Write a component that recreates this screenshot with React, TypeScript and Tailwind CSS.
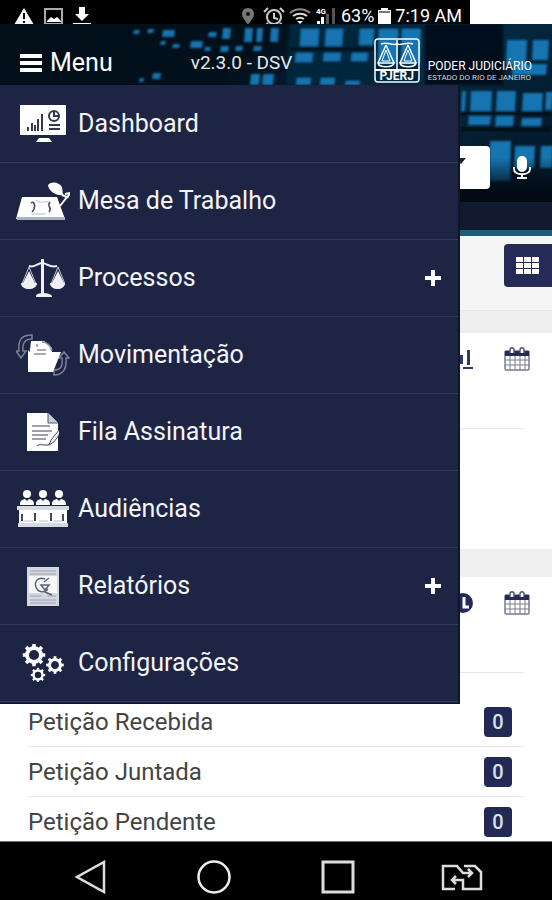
import type { ReactNode } from 'react';

interface MenuEntry {
  label: string;
  icon: ReactNode;
  expandable?: boolean;
}

interface Petition {
  label: string;
  count: number;
}

// x, y, width, height of the lit windows in the header photo
const WINDOWS = [
  [133, 6, 6, 4], [147, 5, 6, 4], [162, 6, 12, 7], [160, 17, 5, 4], [172, 20, 7, 4], [190, 17, 12, 7],
  [208, 8, 8, 5], [222, 4, 8, 11], [204, 23, 6, 4], [220, 22, 8, 6], [244, 4, 8, 14], [256, 4, 6, 14],
  [235, 22, 7, 5], [253, 22, 8, 5], [270, 4, 8, 14], [152, 49, 8, 6], [139, 54, 4, 4], [250, 50, 9, 11],
  [262, 50, 11, 11], [300, 5, 18, 17], [325, 5, 17, 17], [295, 29, 17, 9], [323, 29, 17, 8],
  [359, 5, 14, 16], [351, 29, 16, 8], [378, 5, 19, 34], [401, 5, 19, 34], [296, 54, 14, 7], [320, 54, 14, 7],
  [345, 57, 14, 4], [506, 16, 20, 24], [532, 16, 16, 20], [512, 40, 34, 11],
  [461, 67, 4, 20], [470, 67, 21, 20], [496, 67, 19, 20], [522, 69, 20, 18], [468, 92, 22, 9],
  [495, 92, 18, 10], [521, 94, 20, 8], [545, 68, 7, 18], [489, 117, 21, 40], [514, 122, 20, 22], [540, 122, 12, 22],
];

function HeaderPhoto() {
  return (
    <svg className="absolute inset-0 h-full w-full" viewBox="0 0 552 178" preserveAspectRatio="xMidYMin slice" aria-hidden="true">
      <defs>
        <linearGradient id="night" x1="0" y1="0" x2="1" y2="0.4">
          <stop offset="0" stopColor="#020f19" />
          <stop offset="0.45" stopColor="#02101b" />
          <stop offset="0.75" stopColor="#052c46" />
          <stop offset="1" stopColor="#041c2e" />
        </linearGradient>
        <linearGradient id="floor" x1="0" y1="0" x2="0" y2="1">
          <stop offset="0.75" stopColor="#020b14" stopOpacity="0" />
          <stop offset="0.95" stopColor="#020b14" />
        </linearGradient>
        <filter id="soft">
          <feGaussianBlur stdDeviation="1.2" />
        </filter>
      </defs>
      <rect width="552" height="178" fill="url(#night)" />
      <g filter="url(#soft)">
        <path d="M290 0h130v61H286z" fill="#05263e" />
        <path d="M425 0h78v61h-78z" fill="#03111d" />
        <g fill="#1874b0">
          {WINDOWS.map(([x, y, w, h]) => (
            <path key={`${x}-${y}`} d={`M${x + 1} ${y}h${w}l-1 ${h}h${-w}z`} />
          ))}
        </g>
        <path d="M461 89h91M461 105h91M290 25h84" stroke="#020d17" strokeWidth="3" />
      </g>
      <rect width="552" height="178" fill="url(#floor)" />
    </svg>
  );
}

function CourtLogo() {
  return (
    <svg width="46" height="45" viewBox="0 0 46 45" fill="none" stroke="#fff" strokeWidth="1.5" aria-hidden="true">
      <rect x="1" y="1" width="44" height="43" rx="3" />
      <path d="M23 2v30M7 6c6-3 11 2 16 0 5 2 10-3 16 0" />
      <path d="M12 7L4 25M12 7l8 18M34 7l-8 18M34 7l8 18" />
      <path d="M4 25h16c-1 5-15 5-16 0zM26 25h16c-1 5-15 5-16 0z" />
      <path d="M12 12l-4 11h8zM34 12l-4 11h8z" strokeWidth="1" />
      <path d="M1 32h44" strokeWidth="2" />
    </svg>
  );
}

function DashboardIcon() {
  return (
    <svg width="46" height="38" viewBox="0 0 46 38" aria-hidden="true">
      <path d="M0 0h46v30H0zM19 33h10l3 4H16z" fill="#fff" />
      <path d="M8 26v-4M12 26v-8M15 26v-6M18 26V14M22 26V9" stroke="#333a52" strokeWidth="2" />
      <circle cx="34" cy="11" r="5" fill="none" stroke="#333a52" strokeWidth="2" />
      <path d="M34 6v5h6M29 20h11M29 24h11" fill="none" stroke="#333a52" strokeWidth="2" />
    </svg>
  );
}

function DeskIcon() {
  return (
    <svg width="54" height="39" viewBox="0 0 54 39" aria-hidden="true">
      <path d="M6 15h35l8 22H0z" fill="#fff" />
      <path d="M1 35h48v3H1z" fill="#aab0c2" />
      <path d="M15 21c4-3 5 5 1 9M34 20c-4 5 3 5-1 10" fill="none" stroke="#40465c" strokeWidth="1.5" />
      <path d="M20 18c3 4 9 1 13 2M15 32h15" fill="none" stroke="#b8bccb" />
      <path d="M32 3c3-4 11-3 14 2l1 8c-6 1-14-3-15-10z" fill="#fff" />
      <path d="M46 13l5 2-7 9M49 12l5-1-3 5" fill="none" stroke="#fff" strokeWidth="2" />
    </svg>
  );
}

function ScalesIcon() {
  return (
    <svg width="44" height="39" viewBox="0 0 44 39" fill="#eef0f6" aria-hidden="true">
      <path d="M20 0h3v36h-3zM15 37c0-4 14-4 16 0v1H15z" />
      <path d="M8 7c7 2 8-3 13-3s7 5 15 3" fill="none" stroke="#eef0f6" strokeWidth="2" />
      <path d="M8 8L1 25h14zM37 8l-7 17h14z" fill="none" stroke="#c5c9d8" />
      <path d="M8 12l-6 12H0c0 8 16 8 16 0h-2zM37 12l-6 12h-2c0 8 15 8 15 0h-1z" />
    </svg>
  );
}

function FolderIcon() {
  return (
    <svg width="54" height="42" viewBox="0 0 54 42" aria-hidden="true">
      <g fill="none" stroke="#79809d" strokeWidth="1.5">
        <path d="M16 1C5 1 2 6 3 17H0l5 7 5-7H7C6 9 9 5 16 5zM38 41c9 0 13-6 12-17h3l-5-6-5 6h3c1 8-1 12-8 12z" />
      </g>
      <path d="M15 7h13l8 7v10H13z" fill="#fff" />
      <path d="M21 10v3M21 16h9M26 8c5 0 9 4 10 9M18 20h12" fill="none" stroke="#8a90a3" strokeWidth="1.5" />
      <path d="M12 16l4 5h13l4-3h12l-8 20H12z" fill="#fff" />
    </svg>
  );
}

function SignatureIcon() {
  return (
    <svg width="32" height="38" viewBox="0 0 32 38" aria-hidden="true">
      <path d="M0 0h21l10 10v28H0z" fill="#fff" />
      <path d="M21 0v10h10" fill="#c9ccd8" stroke="#555b73" />
      <path d="M5 13h18M5 18h20M5 22h16M5 26h14M10 33c4-4 7 1 14-2" fill="none" stroke="#7d8191" strokeWidth="1.5" />
      <path d="M32 17l-8 10-2 5 5-3 7-10" fill="#eee" stroke="#555b73" />
    </svg>
  );
}

function HearingIcon() {
  return (
    <svg width="52" height="38" viewBox="0 0 52 38" fill="#fff" aria-hidden="true">
      {[10, 26, 42].map((x) => (
        <g key={x}>
          <circle cx={x} cy="4" r="4" />
          <path d={`M${x - 7} 15c0-5 2-5 5-6l2 2 2-2c3 1 5 1 5 6z`} />
        </g>
      ))}
      <path d="M0 16h52v4H0zM1 33h50v4H1z" fill="#d6d9e3" />
      <path d="M2 20h48v13H2z" />
      <path d="M5 24v7M18 23v8M34 23v8M46 24v7" stroke="#43495f" strokeWidth="2" />
      <path d="M7 31h9M22 31h9M37 31h8" stroke="#bbbfcb" />
    </svg>
  );
}

function ReportIcon() {
  return (
    <svg width="32" height="39" viewBox="0 0 32 39" aria-hidden="true">
      <path d="M0 0h32v39H0z" fill="#d4d7df" />
      <path d="M2 9h28v17H2z" fill="#f8f8fa" />
      <path d="M3 4h26M3 7h26M3 29h12M20 29h9M3 33h26M3 36h26" stroke="#a0a4b2" />
      <path d="M18 12c-7-3-11 3-9 8 2 6 9 6 12 2M14 18h8l-4 5zM17 15l5-4M18 25l7 3" fill="none" stroke="#5c6274" strokeWidth="1.5" />
    </svg>
  );
}

interface GearProps {
  x: number;
  y: number;
  r: number;
}

function Gear({ x, y, r }: GearProps) {
  return (
    <g transform={`translate(${x} ${y})`}>
      <circle r={r} fill="none" stroke="#fff" strokeWidth={r * 0.55} />
      {[0, 45, 90, 135, 180, 225, 270, 315].map((angle) => (
        <rect key={angle} x={-r * 0.25} y={-r * 1.6} width={r * 0.5} height={r * 0.5} fill="#fff" transform={`rotate(${angle})`} />
      ))}
    </g>
  );
}

function GearsIcon() {
  return (
    <svg width="42" height="38" viewBox="0 0 42 38" aria-hidden="true">
      <Gear x={12} y={11} r={7} />
      <Gear x={33} y={21} r={5.5} />
      <Gear x={16} y={31} r={4.5} />
    </svg>
  );
}

function CalendarIcon() {
  return (
    <svg width="26" height="24" viewBox="0 0 26 24" aria-hidden="true">
      <rect x="1" y="4" width="24" height="19" rx="1" fill="#fff" stroke="#777b8d" strokeWidth="1.5" />
      <path d="M1 4h24v5H1z" fill="#252b57" />
      <path d="M1 13h24M1 18h24M6 9v14M11 9v14M16 9v14M21 9v14" stroke="#777b8d" />
      <path d="M6 6V3c0-3 4-3 4 0v3M16 6V3c0-3 4-3 4 0v3" fill="#fff" stroke="#555a72" strokeWidth="1.5" />
    </svg>
  );
}

function StatusBar() {
  return (
    <div className="flex h-6 bg-white">
      <div className="flex w-[470px] items-center justify-between bg-black pt-2 pr-2 pl-3 text-white">
        <div className="flex items-center gap-2">
          <svg width="24" height="17" viewBox="0 0 24 17" aria-hidden="true">
            <path d="M12 0l10 17H2z" fill="#fff" />
            <path d="M12 5v6M12 13v2" stroke="#000" strokeWidth="2" />
          </svg>
          <svg width="20" height="17" viewBox="0 0 20 17" aria-hidden="true">
            <path d="M1 1h17v15H1z" fill="none" stroke="#aaa" strokeWidth="2" />
            <path d="M3 13l4-4 3 2 3-2 4 4v1H3z" fill="#fff" />
          </svg>
          <svg width="20" height="19" viewBox="0 0 20 19" fill="#fff" aria-hidden="true">
            <path d="M7 0h6v7h4l-7 7-7-7h4zM1 16h18v2H1z" />
          </svg>
        </div>
        <div className="flex items-center gap-1 text-lg leading-4">
          <svg className="mr-1" width="14" height="17" viewBox="0 0 14 17" aria-hidden="true">
            <path d="M7 0C3 0 1 3 1 6c0 4 4 7 6 11 2-4 6-7 6-11 0-3-2-6-6-6z" fill="#777" />
            <circle cx="7" cy="6" r="2" fill="#111" />
          </svg>
          <svg width="22" height="18" viewBox="0 0 22 18" fill="none" stroke="#ccc" strokeWidth="2" aria-hidden="true">
            <circle cx="11" cy="10" r="7" />
            <path d="M11 6v5l4 1M1 5l4-4M21 5l-4-4M5 16l-2 2M17 16l2 2" />
          </svg>
          <svg width="22" height="16" viewBox="0 0 22 16" fill="none" stroke="#ddd" strokeWidth="2" aria-hidden="true">
            <path d="M1 5c6-5 14-5 20 0" stroke="#888" />
            <path d="M4 8c4-3 10-3 14 0M7 11c3-2 5-2 8 0" />
            <path d="M11 16l-3-3h6z" fill="#fff" stroke="none" />
          </svg>
          <svg width="22" height="18" viewBox="0 0 22 18" aria-hidden="true">
            <text x="1" y="7" fill="#fff" fontSize="8" fontWeight="700">4G</text>
            <path d="M2 14h3v3H2zM6 10h3v7H6z" fill="#fff" />
            <path d="M11 7h3v10h-3zM17 1h3v16h-3z" fill="#555" />
          </svg>
          <span>63%</span>
          <svg width="13" height="16" viewBox="0 0 13 16" fill="#fff" aria-hidden="true">
            <path d="M3 0h7v2h3v14H0V2h3z" />
            <path d="M1 3h11v2H1z" fill="#777" />
          </svg>
          <span>7:19 AM</span>
        </div>
      </div>
    </div>
  );
}

function Header() {
  return (
    <header className="relative h-[212px] border-b-[6px] border-[#1f5d7c] bg-[#111a2e]">
      <div className="relative h-[178px] overflow-hidden">
        <HeaderPhoto />
        <div className="relative flex h-[61px] items-center text-white">
          <button type="button" className="ml-5 flex items-center gap-2 pt-4 text-[25px] leading-6">
            <svg width="22" height="18" viewBox="0 0 22 18" fill="#fff" aria-hidden="true">
              <path d="M0 0h22v4H0zM0 7h22v4H0zM0 14h22v4H0z" />
            </svg>
            Menu
          </button>
          <span className="ml-[78px] pt-4 text-[19px] leading-6 text-gray-200">v2.3.0 - DSV</span>
          <div className="ml-auto flex items-end gap-2 pt-3 pr-5">
            <div className="relative">
              <CourtLogo />
              <span className="absolute inset-x-0 bottom-px text-center text-xs leading-3 font-bold">PJERJ</span>
            </div>
            <div>
              <p className="text-xs leading-[14px]">PODER JUDICIÁRIO</p>
              <p className="text-[8px] leading-[10px] text-gray-300">ESTADO DO RIO DE JANEIRO</p>
            </div>
          </div>
        </div>
        <div className="relative flex items-center justify-end gap-[22px] pt-[61px] pr-5">
          <div className="relative">
            <select aria-label="Tipo de consulta" className="block h-[43px] w-60 appearance-none rounded-sm bg-white" />
            <svg className="pointer-events-none absolute top-3 right-6" width="10" height="6" viewBox="0 0 10 6" aria-hidden="true">
              <path d="M0 0h10L5 6z" fill="#222" />
            </svg>
          </div>
          <button type="button" aria-label="Pesquisa por voz">
            <svg width="20" height="24" viewBox="0 0 20 24" fill="none" stroke="#fff" strokeWidth="2" aria-hidden="true">
              <rect x="6" y="1" width="8" height="14" rx="4" fill="#fff" />
              <path d="M2 11v2c0 7 16 7 16 0v-2M10 18v4M5 22h10" />
            </svg>
          </button>
        </div>
      </div>
    </header>
  );
}

const MENU: MenuEntry[] = [
  { label: 'Dashboard', icon: <DashboardIcon /> },
  { label: 'Mesa de Trabalho', icon: <DeskIcon /> },
  { label: 'Processos', icon: <ScalesIcon />, expandable: true },
  { label: 'Movimentação', icon: <FolderIcon /> },
  { label: 'Fila Assinatura', icon: <SignatureIcon /> },
  { label: 'Audiências', icon: <HearingIcon /> },
  { label: 'Relatórios', icon: <ReportIcon />, expandable: true },
  { label: 'Configurações', icon: <GearsIcon /> },
];

function SideMenu() {
  return (
    <nav className="absolute top-[85px] left-0 z-10 w-5/6 border-r-2 border-b border-[#10152c] bg-[#1e2444] py-px">
      <ul>
        {MENU.map(({ label, icon, expandable }) => (
          <li key={label} className="border-b border-[#323a5e]">
            <a href="#" className="flex h-[76px] items-center pr-4 pl-4 text-[25px] text-gray-100">
              <span className="flex w-[54px] justify-center">{icon}</span>
              <span className="ml-2">{label}</span>
              {expandable && (
                <svg className="ml-auto" width="18" height="18" viewBox="0 0 18 18" fill="#fff" aria-hidden="true">
                  <path d="M7 1h4v6h6v4h-6v6H7v-6H1V7h6z" />
                </svg>
              )}
            </a>
          </li>
        ))}
      </ul>
    </nav>
  );
}

interface PanelHeaderProps {
  children: ReactNode;
}

function PanelHeader({ children }: PanelHeaderProps) {
  return (
    <>
      <div className="flex h-[95px] items-start justify-end gap-[30px] pt-[14px] pr-[22px]">
        {children}
        <CalendarIcon />
      </div>
      <div className="mx-7 h-px bg-gray-200" />
    </>
  );
}

const PETITIONS: Petition[] = [
  { label: 'Petição Recebida', count: 0 },
  { label: 'Petição Juntada', count: 0 },
  { label: 'Petição Pendente', count: 0 },
];

function Content() {
  return (
    <main>
      <div className="flex h-[75px] items-start justify-end border-b border-gray-200 bg-[#f5f5f5] pt-2">
        <button type="button" aria-label="Grade" className="flex h-[43px] w-12 items-center justify-center rounded-l-sm bg-[#252a57]">
          <svg width="24" height="18" viewBox="0 0 24 18" fill="#fff" aria-hidden="true">
            {[0, 6, 12].map((y) => (
              <path key={y} d={`M0 ${y}h7v5H0zM8 ${y}h7v5H8zM16 ${y}h7v5h-7z`} />
            ))}
          </svg>
        </button>
      </div>
      <div className="h-[22px] bg-[#eeeeee]" />

      <section className="h-[216px]">
        <PanelHeader>
          <svg width="14" height="24" viewBox="0 0 14 24" aria-hidden="true">
            <path d="M0 8h3v9H0zM7 3h3v15H7zM3 20h10v2H3z" fill="#343a62" />
          </svg>
        </PanelHeader>
      </section>
      <div className="h-7 bg-[#f0f0f0]" />

      <section>
        <PanelHeader>
          <svg width="24" height="24" viewBox="0 0 24 24" aria-hidden="true">
            <circle cx="13" cy="12" r="10" fill="#252b57" />
            <path d="M14 6v10h5" fill="none" stroke="#fff" strokeWidth="3" />
          </svg>
        </PanelHeader>
        <ul className="mx-7 pt-6">
          {PETITIONS.map(({ label, count }) => (
            <li key={label} className="flex h-[50px] items-start justify-between border-b border-gray-200 pt-[10px] pr-3 text-2xl leading-[30px] text-[#444] last:h-11 last:border-b-0">
              <span>{label}</span>
              <span className="flex h-[30px] w-7 items-center justify-center rounded-sm bg-[#222955] text-xl font-medium text-[#d5e2f2]">{count}</span>
            </li>
          ))}
        </ul>
      </section>
    </main>
  );
}

function AndroidNav() {
  return (
    <nav className="grid h-[59px] grid-cols-4 place-items-center border-t border-gray-500 bg-black pt-3 pr-7 pl-7">
      <button type="button" aria-label="Voltar">
        <svg width="32" height="34" viewBox="0 0 32 34" fill="none" stroke="#ddd" strokeWidth="2.5" aria-hidden="true">
          <path d="M30 2v30L3 17z" />
        </svg>
      </button>
      <button type="button" aria-label="Início">
        <svg width="36" height="34" viewBox="0 0 36 34" fill="none" stroke="#eee" strokeWidth="2.5" aria-hidden="true">
          <circle cx="18" cy="17" r="15.5" />
        </svg>
      </button>
      <button type="button" aria-label="Recentes">
        <svg width="34" height="34" viewBox="0 0 34 34" fill="none" stroke="#ddd" strokeWidth="3" aria-hidden="true">
          <path d="M2 2h30v30H2z" />
        </svg>
      </button>
      <button type="button" aria-label="Trocar SIM">
        <svg width="42" height="28" viewBox="0 0 42 28" fill="none" stroke="#ddd" strokeWidth="2.5" aria-hidden="true">
          <path d="M14 26H2V3h14l6 7h9M23 3h11l6 6v17H22v-9h-11" />
          <path d="M27 6l4 4-4 4M15 13l-4 4 4 4" />
        </svg>
      </button>
    </nav>
  );
}

export default function App() {
  return (
    <div className="relative min-h-screen bg-white font-[Roboto,sans-serif]">
      <StatusBar />
      <Header />
      <Content />
      <AndroidNav />
      <SideMenu />
    </div>
  );
}
